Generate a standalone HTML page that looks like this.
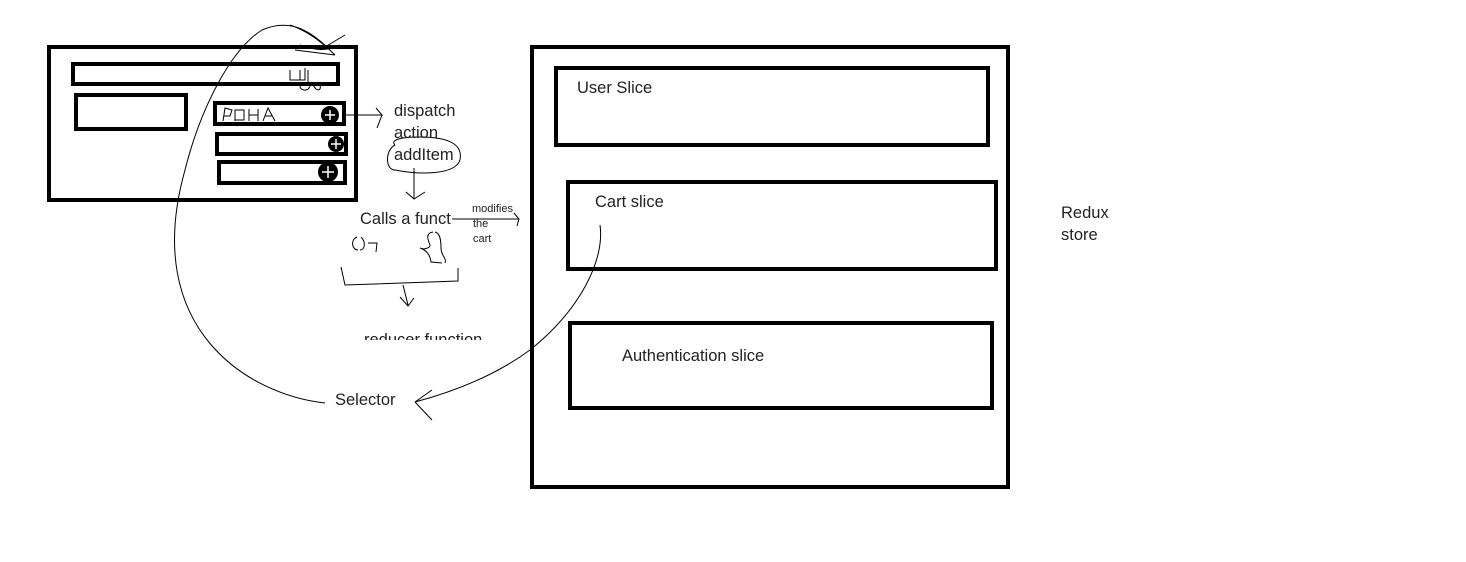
<!DOCTYPE html>
<html><head><meta charset="utf-8"><style>
html,body{margin:0;padding:0;background:#fff;}
svg{display:block}
text{font-family:"Liberation Sans",sans-serif;fill:#222;}
</style></head><body>
<svg width="1466" height="562" viewBox="0 0 1466 562">
<rect width="1466" height="562" fill="#fff"/>
<g fill="none" stroke="#000" stroke-width="4">
<rect x="49" y="47" width="307" height="153"/>
<rect x="73" y="64" width="265" height="20"/>
<rect x="76" y="95" width="110" height="34"/>
<rect x="215" y="103" width="129" height="21"/>
<rect x="217" y="134" width="129" height="20"/>
<rect x="219" y="162" width="126" height="21"/>
<rect x="532" y="47" width="476" height="440"/>
<rect x="556" y="68" width="432" height="77"/>
<rect x="568" y="182" width="428" height="87"/>
<rect x="570" y="323" width="422" height="85"/>
</g>
<g fill="#000">
<circle cx="330" cy="115" r="9"/><circle cx="336" cy="144" r="8"/><circle cx="328" cy="172" r="10"/>
</g>
<g stroke="#fff" stroke-width="1.5"><path d="M325,115h10M330,110v10M331,144h10M336,139v10M322,172h12M328,166v12"/></g>
<g fill="none" stroke="#000" stroke-width="1">
<path d="M223,121 L225,108 L232,110 L230,116 L224,116 M235,121 V110 H244 V120 H235 M249,121V109M249,115H258M258,109V121M263,121L268,108L275,121M265,116H272"/>
<path d="M290,70 V80 H305 V68 M300,70 V80 M308,70 V82 M300,86 C300,92 312,92 310,82 M312,82 C315,92 322,92 320,85"/>
<path d="M325,403 C250,395 140,330 185,170 C200,110 230,50 262,30 C285,20 305,25 330,50 M290,25 C305,30 320,40 335,55 M300,45 C315,50 325,52 340,45 M320,50 L345,35 M295,50 L335,55"/>
<path d="M345,115 H382 L376,108 M382,115 L377,128"/>
<path d="M395,145 C385,150 385,170 395,170 C420,175 455,175 460,160 C463,145 450,137 420,137 C400,137 390,140 395,145"/>
<path d="M414,168 V199 M406,192 L414,199 L425,192"/>
<path d="M452,219 H519 M514,213 L519,219 L517,226"/>
<path d="M357,237 C350,240 352,250 358,250 M361,237 C366,242 365,250 360,250 M368,243 H377 L376,252 M433,232 C425,233 428,240 430,245 C430,248 424,250 420,248 C426,250 430,254 431,262 L442,263 M435,232 C440,233 441,240 441,248 C441,256 447,258 445,263"/>
<path d="M341,267 L345,285 L458,281 V268 M403,285 L408,305 M400,297 L408,306 L414,298"/>
<path d="M600,225 C605,260 580,310 530,350 C500,372 460,390 415,402 L432,390 M415,402 L432,420"/>
</g>
<text x="577" y="93" font-size="16.5">User Slice</text>
<text x="595" y="207" font-size="16.5">Cart slice</text>
<text x="622" y="361" font-size="16.5">Authentication slice</text>
<text x="1061" y="218" font-size="16.5">Redux</text>
<text x="1061" y="240" font-size="16.5">store</text>
<text x="394" y="116" font-size="16.5">dispatch</text>
<text x="394" y="138" font-size="16.5">action</text>
<text x="394" y="160" font-size="16.5">addItem</text>
<text x="360" y="224" font-size="16.5">Calls a funct</text>
<text x="472" y="212" font-size="11">modifies</text>
<text x="473" y="227" font-size="11">the</text>
<text x="473" y="242" font-size="11">cart</text>
<text x="335" y="405" font-size="16.5">Selector</text>
<svg x="0" y="0" width="1466" height="340"><text x="364" y="345" font-size="16.5">reducer function</text></svg>
</svg>
</body></html>
